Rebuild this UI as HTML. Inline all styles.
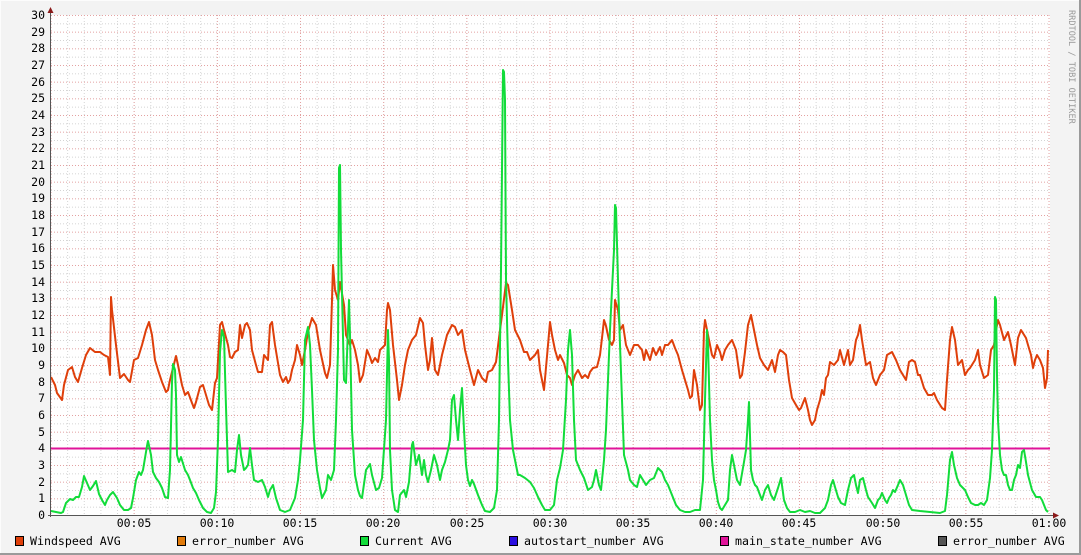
<!DOCTYPE html>
<html><head><meta charset="utf-8"><style>
html,body{margin:0;padding:0;background:#f3f3f3;}
svg{display:block;}
text{font-family:"DejaVu Sans Mono","Liberation Mono",monospace;}
</style></head><body>
<svg width="1081" height="555" viewBox="0 0 1081 555" xmlns="http://www.w3.org/2000/svg">
<defs>
<pattern id="hg" x="51" y="15" width="1000" height="16.667" patternUnits="userSpaceOnUse">
<line x1="0" y1="0.5" x2="1000" y2="0.5" stroke="#e3a0a0" stroke-width="1" stroke-dasharray="1,2"/>
<line x1="0" y1="8.83" x2="1000" y2="8.83" stroke="#d4d4d4" stroke-width="1" stroke-dasharray="1,2"/>
</pattern>
<pattern id="vg" x="50.5" y="15" width="16.633" height="500" patternUnits="userSpaceOnUse">
<line x1="0.5" y1="0" x2="0.5" y2="500" stroke="#d4d4d4" stroke-width="1" stroke-dasharray="1,2"/>
</pattern>
<pattern id="vr" x="50.5" y="15" width="83.17" height="500" patternUnits="userSpaceOnUse">
<line x1="0.5" y1="0" x2="0.5" y2="500" stroke="#e3a0a0" stroke-width="1" stroke-dasharray="1,2"/>
</pattern>
</defs>
<rect x="0" y="0" width="1081" height="555" fill="#f3f3f3"/>
<line x1="0" y1="0.5" x2="1081" y2="0.5" stroke="#fcfcfc"/>
<line x1="0.5" y1="0" x2="0.5" y2="555" stroke="#fcfcfc"/>
<line x1="0" y1="554" x2="1081" y2="554" stroke="#9a9a9a" stroke-width="2"/>
<line x1="1080" y1="0" x2="1080" y2="555" stroke="#9a9a9a" stroke-width="2"/>
<rect x="51" y="15" width="999" height="500" fill="#fff"/>
<rect x="51" y="15" width="999" height="500" fill="url(#vg)"/>
<rect x="51" y="15" width="999" height="500" fill="url(#hg)"/>
<rect x="51" y="15" width="999" height="500" fill="url(#vr)"/>
<g font-size="11.5" fill="#000" text-anchor="end">
<text x="45" y="19">30</text><text x="45" y="36">29</text><text x="45" y="52">28</text><text x="45" y="69">27</text><text x="45" y="86">26</text><text x="45" y="102">25</text><text x="45" y="119">24</text><text x="45" y="136">23</text><text x="45" y="152">22</text><text x="45" y="169">21</text><text x="45" y="186">20</text><text x="45" y="202">19</text><text x="45" y="219">18</text><text x="45" y="236">17</text><text x="45" y="252">16</text><text x="45" y="269">15</text><text x="45" y="286">14</text><text x="45" y="302">13</text><text x="45" y="319">12</text><text x="45" y="336">11</text><text x="45" y="352">10</text><text x="45" y="369">9</text><text x="45" y="386">8</text><text x="45" y="402">7</text><text x="45" y="419">6</text><text x="45" y="436">5</text><text x="45" y="452">4</text><text x="45" y="469">3</text><text x="45" y="486">2</text><text x="45" y="502">1</text><text x="45" y="519">0</text>
</g>
<g font-size="11.5" fill="#000" text-anchor="middle">
<text x="134" y="527">00:05</text><text x="217" y="527">00:10</text><text x="300" y="527">00:15</text><text x="383" y="527">00:20</text><text x="467" y="527">00:25</text><text x="550" y="527">00:30</text><text x="633" y="527">00:35</text><text x="716" y="527">00:40</text><text x="799" y="527">00:45</text><text x="883" y="527">00:50</text><text x="966" y="527">00:55</text><text x="1049" y="527">01:00</text>
</g>
<line x1="51" y1="448.5" x2="1050" y2="448.5" stroke="#e0149a" stroke-width="2"/>
<polyline fill="none" stroke="#df3f0a" stroke-width="2" stroke-linejoin="round" points="51,377 55,385 57,393 62,400 64,385 68,370 72,367 75,377 78,382 82,368 86,355 90,348 95,352 100,352 104,355 108,357 110,375 111,297 112,310 116,345 120,378 124,374 128,380 130,382 134,360 138,358 142,345 146,330 149,322 152,335 155,360 158,370 162,382 166,392 168,390 170,380 173,368 176,356 178,365 182,385 185,395 188,392 192,403 194,408 196,402 200,387 203,385 206,395 209,405 212,410 215,383 217,378 220,325 222,322 224,330 228,345 230,357 232,358 235,352 238,350 240,325 242,338 245,325 247,323 250,330 252,350 256,365 258,372 262,372 264,355 268,360 270,325 272,322 275,345 280,375 283,382 286,377 288,383 290,380 292,370 295,360 297,345 300,355 302,365 305,350 308,332 312,318 316,325 320,350 325,373 327,378 330,365 332,300 333,265 335,290 338,300 340,282 344,305 346,335 350,345 352,340 355,350 358,365 360,382 363,375 367,350 370,357 372,363 375,358 378,362 380,350 385,345 387,310 388,303 390,310 393,345 397,380 399,400 402,385 405,365 408,350 412,340 416,335 420,318 423,323 425,345 428,370 430,360 432,338 435,370 438,375 442,355 447,335 452,325 455,327 458,335 462,330 465,350 470,370 474,385 478,370 482,378 486,382 488,372 492,370 496,362 500,330 502,315 506,283 508,285 512,310 515,330 520,340 524,352 527,352 530,360 535,355 538,350 540,370 544,390 548,345 550,322 552,335 555,350 558,360 560,355 564,363 567,375 570,378 572,385 575,375 578,370 582,378 585,375 588,378 590,372 593,368 597,367 600,355 602,338 604,320 606,326 609,340 612,345 614,340 615,300 618,310 620,330 623,325 626,345 630,355 634,345 638,345 642,350 644,360 646,350 650,360 653,348 656,355 660,347 662,355 665,345 668,345 672,340 675,348 678,355 682,370 685,380 688,390 690,398 692,396 694,370 697,385 700,410 702,405 704,330 705,320 708,335 710,345 712,355 714,358 717,345 720,352 722,360 725,350 728,345 732,340 736,350 740,378 742,375 745,352 748,325 751,315 754,330 757,345 760,358 764,365 768,370 772,360 775,372 778,355 780,350 783,352 786,355 789,380 792,398 796,405 799,410 801,408 805,398 808,410 810,420 812,425 815,420 817,410 820,400 822,390 824,395 826,378 828,375 830,362 834,365 838,360 840,350 844,365 848,350 850,365 853,360 856,340 858,335 860,325 862,340 866,365 870,362 873,378 876,385 880,375 884,370 887,355 892,352 896,360 900,370 903,375 906,380 909,362 912,360 915,362 918,375 920,375 924,388 928,395 932,395 934,393 937,400 942,408 945,410 947,380 950,340 952,327 955,340 958,365 962,360 965,375 968,370 970,368 975,360 978,350 980,365 984,378 988,375 991,350 994,345 996,330 998,320 1000,325 1004,340 1008,332 1011,345 1013,355 1015,365 1018,338 1021,330 1026,338 1028,345 1031,355 1033,368 1035,360 1037,355 1040,360 1043,368 1045,388 1047,378 1048,350"/>
<polyline fill="none" stroke="#12dc3a" stroke-width="2" stroke-linejoin="round" points="51,511 56,512 61,513 63,512 66,503 70,499 73,500 76,497 79,497 82,487 84,476 87,483 90,490 93,486 96,481 99,494 102,500 105,505 107,500 110,495 113,492 117,498 120,505 124,510 128,510 131,508 133,498 136,480 139,472 141,475 143,470 147,446 148,441 151,455 153,472 156,478 159,482 162,488 165,497 168,498 170,470 172,382 173,364 175,370 176,395 177,455 179,462 181,457 185,470 188,475 190,480 193,488 196,493 199,500 203,508 207,512 211,513 214,508 216,492 218,440 220,352 222,330 224,337 226,407 228,472 230,471 232,470 235,472 237,450 239,435 241,455 244,470 246,468 248,465 250,448 252,465 254,480 258,482 262,480 265,487 268,497 270,490 273,485 276,498 280,510 285,512 290,510 295,498 298,480 300,460 303,420 305,340 308,327 310,345 312,390 314,440 317,470 320,488 322,498 326,490 328,475 331,480 334,470 336,420 338,350 339,168 340,165 341,250 344,380 346,383 349,300 350,335 352,430 355,475 358,490 360,496 362,498 366,470 370,464 372,475 376,490 379,488 382,478 386,420 388,330 389,360 390,450 392,490 395,510 398,512 400,495 404,490 406,497 409,482 412,445 413,442 416,465 419,455 422,475 424,460 426,475 428,482 431,470 434,455 437,465 440,480 442,470 445,462 448,450 450,440 452,400 454,395 456,420 458,440 460,410 462,388 464,430 466,465 468,480 470,486 472,480 474,484 478,495 482,505 485,511 490,512 494,508 497,490 499,420 501,270 503,70 504,72 505,100 506,280 508,360 510,420 513,450 516,465 518,475 520,475 525,478 530,482 534,488 538,497 542,505 545,510 550,510 554,505 557,480 560,468 563,450 566,400 568,350 570,330 572,355 574,420 576,460 580,470 584,478 588,490 592,487 594,480 596,470 599,485 601,490 604,460 606,430 610,330 614,250 615,205 616,208 618,280 620,345 622,400 624,455 628,470 630,480 634,485 637,487 640,475 643,480 646,485 650,480 654,478 658,468 662,472 665,480 668,485 672,495 676,505 680,510 685,512 690,512 695,510 700,510 703,480 705,400 707,330 708,345 710,420 712,460 714,480 716,490 718,502 720,508 722,510 728,500 730,470 732,455 734,465 737,480 740,485 744,462 746,450 748,420 749,402 751,470 753,480 755,485 757,487 760,495 762,500 765,490 768,485 771,495 774,500 778,488 781,478 784,500 787,508 790,512 795,512 800,510 805,512 810,511 815,513 820,513 825,508 828,500 831,485 833,480 835,487 838,497 841,503 845,505 848,490 851,478 854,475 856,485 858,493 860,480 863,478 866,490 868,497 872,503 875,508 878,500 880,498 882,493 885,500 887,503 889,498 891,495 893,490 895,492 898,485 900,480 903,485 906,495 909,505 912,510 920,511 930,512 940,513 945,511 947,495 950,460 952,452 954,465 957,478 960,485 962,487 965,490 968,497 971,503 975,505 978,505 981,503 984,505 987,500 990,478 992,450 994,390 995,297 996,300 997,375 998,420 1000,455 1002,470 1004,475 1006,475 1008,485 1010,490 1012,490 1014,480 1016,475 1018,465 1020,468 1022,452 1024,450 1026,462 1028,475 1032,490 1036,497 1040,497 1042,500 1044,505 1046,510 1048,512"/>
<line x1="50.5" y1="10" x2="50.5" y2="517" stroke="#555" stroke-width="1"/>
<line x1="48" y1="515.5" x2="1055" y2="515.5" stroke="#555" stroke-width="1"/>
<polygon points="47.5,13 53.5,13 50.5,7" fill="#8b1a1a"/>
<polygon points="1053,512.5 1053,518.5 1059,515.5" fill="#8b1a1a"/>
<g stroke="#000" stroke-width="1">
<rect x="15.5" y="536.5" width="8" height="9" fill="#df3f0a"/>
<rect x="177.5" y="536.5" width="8" height="9" fill="#e07a0a"/>
<rect x="360.5" y="536.5" width="8" height="9" fill="#12dc3a"/>
<rect x="509.5" y="536.5" width="8" height="9" fill="#2a0ee0"/>
<rect x="720.5" y="536.5" width="8" height="9" fill="#e0149a"/>
<rect x="938.5" y="536.5" width="8" height="9" fill="#555"/>
</g>
<g font-size="11.6" fill="#000">
<text x="30" y="545">Windspeed AVG</text>
<text x="192" y="545">error_number AVG</text>
<text x="375" y="545">Current AVG</text>
<text x="524" y="545">autostart_number AVG</text>
<text x="735" y="545">main_state_number AVG</text>
<text x="953" y="545">error_number AVG</text>
</g>
<text transform="translate(1069,10) rotate(90)" font-size="8.6" fill="#999">RRDTOOL / TOBI OETIKER</text>
</svg>
</body></html>
